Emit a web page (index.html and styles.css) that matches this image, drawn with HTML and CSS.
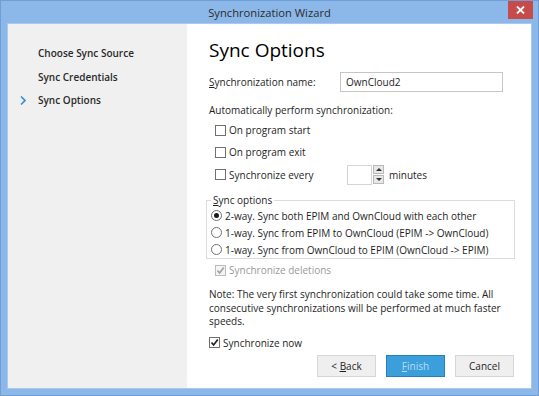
FILE: index.html
```html
<!DOCTYPE html>
<html lang="en">
<head>
    <meta charset="UTF-8">
    <title>Synchronization Wizard</title>
    <link rel="stylesheet" href="styles.css">
</head>
<body>
    <div class="window">
        <div class="titlebar">
            <span class="title">Synchronization Wizard</span>
            <div class="close-button">
                <svg width="9" height="8" viewBox="0 0 9 8"><path d="M1 0.5 L8 7.5 M8 0.5 L1 7.5" stroke="#fff" stroke-width="1.8"/></svg>
            </div>
        </div>
        <div class="client">
            <div class="steps">
                <div class="step">Choose Sync Source</div>
                <div class="step">Sync Credentials</div>
                <div class="step current">
                    <svg class="chevron" width="6" height="9" viewBox="0 0 6 9"><path d="M1 0.5 L5 4.5 L1 8.5" fill="none" stroke="#3c8fd0" stroke-width="1.6"/></svg>
                    Sync Options
                </div>
            </div>
            <div class="page">
                <h1>Sync Options</h1>
                <div class="name-row">
                    <label class="name-label"><u>S</u>ynchronization name:</label>
                    <div class="textbox">OwnCloud2</div>
                </div>
                <div class="caption">Automatically perform synchronization:</div>
                <div class="check-row indent"><span class="box"></span>On program start</div>
                <div class="check-row indent"><span class="box"></span>On program exit</div>
                <div class="check-row indent tall">
                    <span class="box"></span><span class="every-label">Synchronize every</span>
                    <div class="spinner">
                        <div class="spin-field"></div>
                        <div class="spin-buttons">
                            <div class="spin-btn"><span class="arrow-up"></span></div>
                            <div class="spin-btn"><span class="arrow-down"></span></div>
                        </div>
                    </div>
                    <span class="minutes">minutes</span>
                </div>
                <fieldset class="group">
                    <legend><u>S</u>ync options</legend>
                    <div class="radio-row"><span class="radio checked"></span>2-way. Sync both EPIM and OwnCloud with each other</div>
                    <div class="radio-row"><span class="radio"></span>1-way. Sync from EPIM to OwnCloud (EPIM -&gt; OwnCloud)</div>
                    <div class="radio-row"><span class="radio"></span>1-way. Sync from OwnCloud to EPIM (OwnCloud -&gt; EPIM)</div>
                </fieldset>
                <div class="check-row indent disabled deletions">
                    <span class="box checked"><svg width="9" height="9" viewBox="0 0 9 9"><path d="M1.5 4.5 L3.6 7 L7.8 1.5" fill="none" stroke="#a0a0a0" stroke-width="1.7"/></svg></span>Synchronize deletions
                </div>
                <p class="note">Note: The very first synchronization could take some time. All consecutive synchronizations will be performed at much faster speeds.</p>
                <div class="check-row now">
                    <span class="box checked"><svg width="9" height="9" viewBox="0 0 9 9"><path d="M1.5 4.5 L3.6 7 L7.8 1.5" fill="none" stroke="#222" stroke-width="1.7"/></svg></span>Synchronize now
                </div>
                <div class="buttons">
                    <button class="btn">&lt; <u>B</u>ack</button>
                    <button class="btn primary"><u>F</u>inish</button>
                    <button class="btn">Cancel</button>
                </div>
            </div>
        </div>
    </div>
</body>
</html>
```

FILE: styles.css
```css
* {
    box-sizing: border-box;
    margin: 0;
    padding: 0;
}
body {
    font-family: "Open Sans", "Noto Sans", sans-serif;
    font-size: 10px;
    color: #1e1e1e;
    background-color: #fff;
}
.window {
    width: 539px;
    height: 396px;
    background-color: #8bb8e8;
    border: 1px solid #6f9fd6;
    padding: 0 6px 7px 6px;
    position: relative;
}
.titlebar {
    height: 22px;
    display: flex;
    align-items: center;
    justify-content: center;
}
.title {
    font-size: 11.2px;
    color: #2b2b2b;
    margin-top: 1px;
}
.close-button {
    position: absolute;
    top: 0;
    right: 5px;
    width: 25px;
    height: 18px;
    background-color: #c74b4b;
    display: flex;
    align-items: center;
    justify-content: center;
}
.client {
    height: 366px;
    display: flex;
    border: 1px solid #a9c9ee;
    background-color: #fff;
}
.steps {
    width: 180px;
    background-color: #f0f0f0;
    padding-top: 18px;
}
.step {
    height: 23.5px;
    line-height: 23.5px;
    padding-left: 30px;
    font-weight: 600;
    color: #2a2a2a;
    position: relative;
}
.chevron {
    position: absolute;
    left: 12px;
    top: 7px;
}
.page {
    flex: 1;
    padding: 13px 16px 0 22px;
}
h1 {
    font-size: 19px;
    font-weight: 400;
    line-height: 26px;
    color: #000;
}
.name-row {
    display: flex;
    align-items: center;
    margin-top: 9px;
    height: 20px;
}
.name-label {
    width: 131px;
}
.textbox {
    width: 163px;
    height: 20px;
    border: 1px solid #c6c6c6;
    padding-left: 5px;
    line-height: 18px;
}
.caption {
    margin-top: 9px;
    height: 18px;
    line-height: 18px;
}
.check-row {
    display: flex;
    align-items: center;
    height: 22px;
}
.check-row.tall {
    height: 23px;
}
.indent {
    padding-left: 6px;
}
.box {
    width: 11px;
    height: 11px;
    border: 1px solid #707070;
    background-color: #fff;
    margin-right: 3px;
    display: flex;
    align-items: center;
    justify-content: center;
}
.disabled {
    color: #9a9a9a;
}
.disabled .box {
    border-color: #bcbcbc;
    background-color: #f4f4f4;
}
.every-label {
    width: 118px;
}
.spinner {
    display: flex;
    align-items: center;
    margin-right: 5px;
}
.spin-field {
    width: 25px;
    height: 20px;
    border: 1px solid #d4d4d4;
}
.spin-buttons {
    display: flex;
    flex-direction: column;
    gap: 1px;
    margin-left: 1px;
}
.spin-btn {
    width: 11px;
    height: 9px;
    background-color: #e8e8e8;
    border: 1px solid #b8b8b8;
    display: flex;
    align-items: center;
    justify-content: center;
}
.arrow-up {
    border-left: 3px solid transparent;
    border-right: 3px solid transparent;
    border-bottom: 3px solid #333;
}
.arrow-down {
    border-left: 3px solid transparent;
    border-right: 3px solid transparent;
    border-top: 3px solid #333;
}
.group {
    margin: 7px 0 0 -3px;
    width: 309px;
    border: 1px solid #dcdcdc;
    padding: 0 0 0 4px;
}
.group legend {
    padding: 0 2px;
    line-height: 14px;
}
.radio-row {
    display: flex;
    align-items: center;
    height: 17px;
}
.radio {
    width: 11px;
    height: 11px;
    border: 1px solid #707070;
    border-radius: 50%;
    margin-right: 3px;
    display: flex;
    align-items: center;
    justify-content: center;
}
.radio.checked::after {
    content: "";
    width: 5px;
    height: 5px;
    border-radius: 50%;
    background-color: #1a1a1a;
}
.deletions {
    margin-top: 2px;
    height: 18px;
}
.note {
    margin-top: 9px;
    line-height: 13.5px;
    width: 304px;
}
.now {
    margin-top: 5px;
    height: 18px;
}
.buttons {
    display: flex;
    justify-content: flex-end;
    gap: 10px;
    margin-top: 3px;
    padding-right: 1px;
}
.btn {
    width: 59px;
    height: 22px;
    font-family: inherit;
    font-size: 10px;
    color: #1e1e1e;
    background-color: #efefef;
    border: 1px solid #d6d6d6;
}
.btn.primary {
    background-color: #3a9fda;
    border-color: #2c7fb6;
    color: #b9dcf2;
}
```
